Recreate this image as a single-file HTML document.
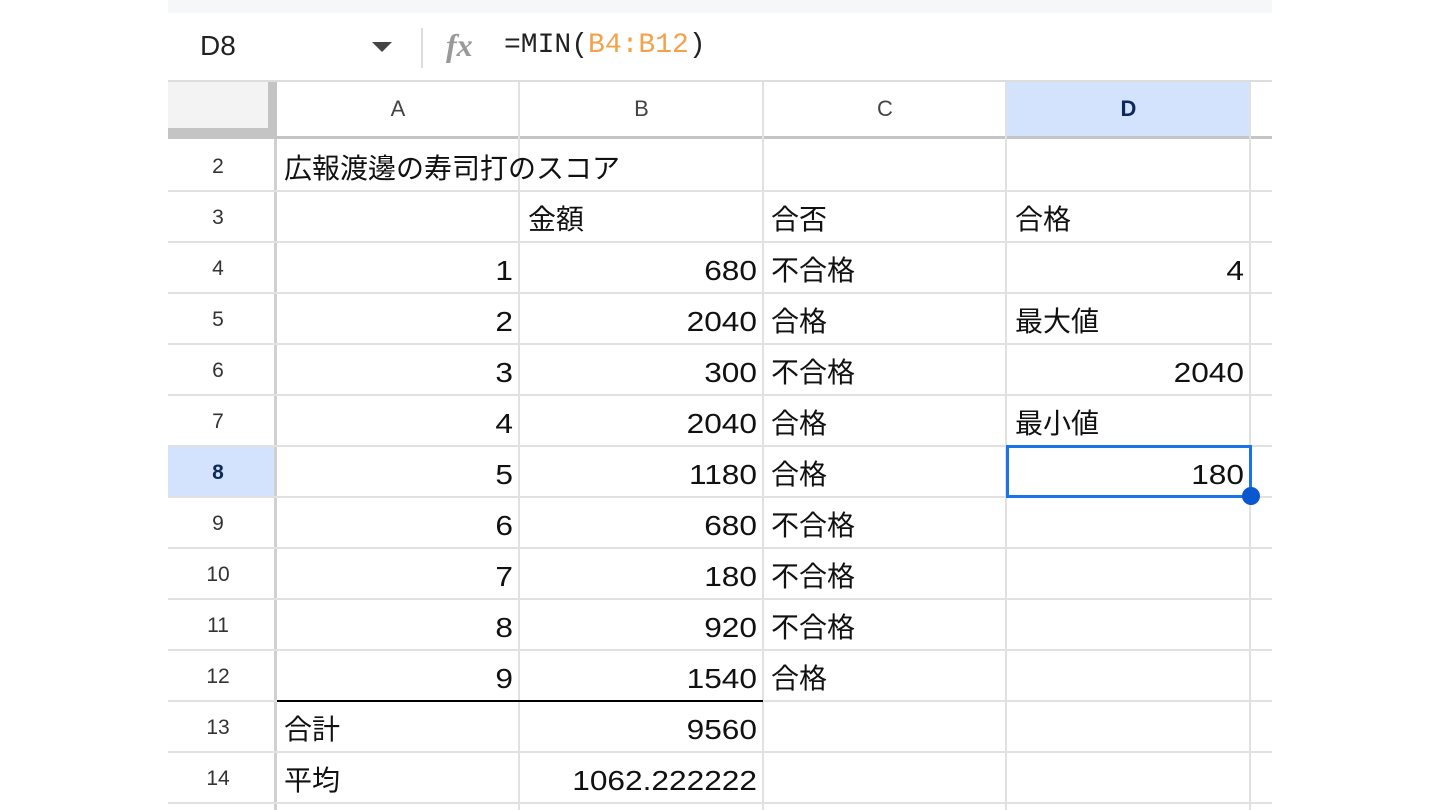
<!DOCTYPE html>
<html><head><meta charset="utf-8"><style>
body{margin:0;width:1440px;height:810px;background:#fff;position:relative;overflow:hidden;font-family:"Liberation Sans","Noto Sans CJK JP",sans-serif;}
.a{position:absolute;}
.h{background:#e1e1e1;height:2px;}
.v{background:#e1e1e1;width:2px;}
.c{position:absolute;height:51px;line-height:58px;font-size:28px;color:#111;white-space:nowrap;}
.r{text-align:right;transform:scaleX(1.13);transform-origin:right center;}
.rh{position:absolute;left:168px;width:100px;height:51px;line-height:53px;text-align:center;font-size:21px;color:#333;}
.ch{position:absolute;top:82px;height:54px;line-height:54px;text-align:center;font-size:22px;color:#444;}
</style></head><body>
<div class="a" style="left:168px;top:0;width:1104px;height:13px;background:#f6f7f8"></div>
<div class="a" style="left:200px;top:30px;font-size:28px;color:#222">D8</div>
<div class="a" style="left:372px;top:42px;width:0;height:0;border-left:10px solid transparent;border-right:10px solid transparent;border-top:10px solid #444"></div>
<div class="a" style="left:421px;top:28px;width:2px;height:40px;background:#ddd"></div>
<div class="a" style="left:446px;top:27px;font-size:32px;font-style:italic;font-weight:bold;font-family:'Liberation Serif',serif;color:#999">fx</div>
<div class="a" style="left:504px;top:30px;font-size:28px;font-family:'Liberation Mono',monospace;color:#222">=MIN(<span style="color:#f4a14a">B4:B12</span>)</div>
<div class="a" style="left:168px;top:80px;width:1104px;height:2px;background:#ddd"></div>
<div class="a" style="left:168px;top:82px;width:100px;height:54px;background:#f3f3f3"></div>
<div class="a" style="left:268px;top:82px;width:9px;height:57px;background:#c4c4c4"></div>
<div class="a" style="left:168px;top:128px;width:100px;height:11px;background:#c4c4c4"></div>
<div class="a" style="left:1007px;top:82px;width:243px;height:54px;background:#d3e3fd"></div>
<div class="ch" style="left:277px;width:242px">A</div>
<div class="ch" style="left:520px;width:243px">B</div>
<div class="ch" style="left:764px;width:242px">C</div>
<div class="ch" style="left:1007px;width:243px;font-weight:bold;color:#0b2a5a">D</div>
<div class="a" style="left:277px;top:136px;width:995px;height:3px;background:#c4c4c4"></div>
<div class="a v" style="left:518px;top:82px;height:728px"></div>
<div class="a v" style="left:762px;top:82px;height:728px"></div>
<div class="a v" style="left:1005px;top:82px;height:728px"></div>
<div class="a v" style="left:1249px;top:82px;height:728px"></div>
<div class="a" style="left:274px;top:139px;width:3px;height:671px;background:#d0d0d0"></div>
<div class="a h" style="left:168px;top:190px;width:1104px"></div>
<div class="a h" style="left:168px;top:241px;width:1104px"></div>
<div class="a h" style="left:168px;top:292px;width:1104px"></div>
<div class="a h" style="left:168px;top:343px;width:1104px"></div>
<div class="a h" style="left:168px;top:394px;width:1104px"></div>
<div class="a h" style="left:168px;top:445px;width:1104px"></div>
<div class="a h" style="left:168px;top:496px;width:1104px"></div>
<div class="a h" style="left:168px;top:547px;width:1104px"></div>
<div class="a h" style="left:168px;top:598px;width:1104px"></div>
<div class="a h" style="left:168px;top:649px;width:1104px"></div>
<div class="a h" style="left:168px;top:700px;width:1104px"></div>
<div class="a h" style="left:168px;top:751px;width:1104px"></div>
<div class="a h" style="left:168px;top:802px;width:1104px"></div>
<div class="a" style="left:277px;top:700px;width:486px;height:2px;background:#000"></div>
<div class="a" style="left:168px;top:447px;width:106px;height:49px;background:#d3e3fd"></div>
<div class="rh" style="top:140px">2</div>
<div class="rh" style="top:191px">3</div>
<div class="rh" style="top:242px">4</div>
<div class="rh" style="top:293px">5</div>
<div class="rh" style="top:344px">6</div>
<div class="rh" style="top:395px">7</div>
<div class="rh" style="top:446px;font-weight:bold;color:#0b2a5a">8</div>
<div class="rh" style="top:497px">9</div>
<div class="rh" style="top:548px">10</div>
<div class="rh" style="top:599px">11</div>
<div class="rh" style="top:650px">12</div>
<div class="rh" style="top:701px">13</div>
<div class="rh" style="top:752px">14</div>
<div class="c" style="left:284px;top:140px">広報渡邊の寿司打のスコア</div>
<div class="c" style="left:528px;top:191px">金額</div>
<div class="c" style="left:771px;top:191px">合否</div>
<div class="c" style="left:1015px;top:191px">合格</div>
<div class="c r" style="left:277px;width:236px;top:242px">1</div>
<div class="c r" style="left:520px;width:237px;top:242px">680</div>
<div class="c" style="left:771px;top:242px">不合格</div>
<div class="c r" style="left:1007px;width:237px;top:242px">4</div>
<div class="c r" style="left:277px;width:236px;top:293px">2</div>
<div class="c r" style="left:520px;width:237px;top:293px">2040</div>
<div class="c" style="left:771px;top:293px">合格</div>
<div class="c" style="left:1015px;top:293px">最大値</div>
<div class="c r" style="left:277px;width:236px;top:344px">3</div>
<div class="c r" style="left:520px;width:237px;top:344px">300</div>
<div class="c" style="left:771px;top:344px">不合格</div>
<div class="c r" style="left:1007px;width:237px;top:344px">2040</div>
<div class="c r" style="left:277px;width:236px;top:395px">4</div>
<div class="c r" style="left:520px;width:237px;top:395px">2040</div>
<div class="c" style="left:771px;top:395px">合格</div>
<div class="c" style="left:1015px;top:395px">最小値</div>
<div class="c r" style="left:277px;width:236px;top:446px">5</div>
<div class="c r" style="left:520px;width:237px;top:446px">1180</div>
<div class="c" style="left:771px;top:446px">合格</div>
<div class="c r" style="left:1007px;width:237px;top:446px">180</div>
<div class="c r" style="left:277px;width:236px;top:497px">6</div>
<div class="c r" style="left:520px;width:237px;top:497px">680</div>
<div class="c" style="left:771px;top:497px">不合格</div>
<div class="c r" style="left:277px;width:236px;top:548px">7</div>
<div class="c r" style="left:520px;width:237px;top:548px">180</div>
<div class="c" style="left:771px;top:548px">不合格</div>
<div class="c r" style="left:277px;width:236px;top:599px">8</div>
<div class="c r" style="left:520px;width:237px;top:599px">920</div>
<div class="c" style="left:771px;top:599px">不合格</div>
<div class="c r" style="left:277px;width:236px;top:650px">9</div>
<div class="c r" style="left:520px;width:237px;top:650px">1540</div>
<div class="c" style="left:771px;top:650px">合格</div>
<div class="c" style="left:284px;top:701px">合計</div>
<div class="c r" style="left:520px;width:237px;top:701px">9560</div>
<div class="c" style="left:284px;top:752px">平均</div>
<div class="c r" style="left:520px;width:237px;top:752px">1062.222222</div>
<div class="a" style="left:1006px;top:445px;width:240px;height:47px;border:3px solid #1a73e8"></div>
<div class="a" style="left:1242px;top:487px;width:18px;height:18px;border-radius:50%;background:#0b57d0"></div>
</body></html>
